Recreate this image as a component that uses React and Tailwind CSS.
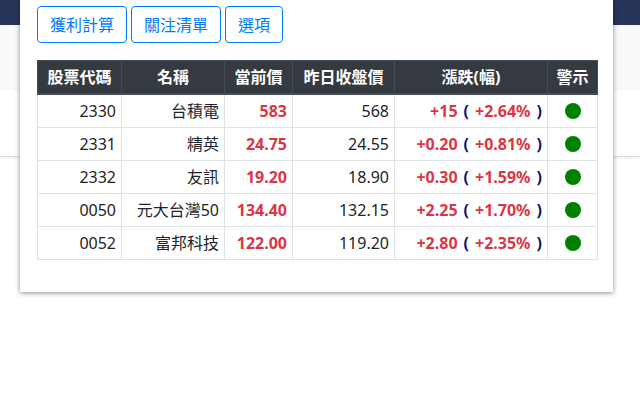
const rows = [
  { code: "2330", name: "台積電", price: "583", prev: "568", diff: "+15", pct: "+2.64%" },
  { code: "2331", name: "精英", price: "24.75", prev: "24.55", diff: "+0.20", pct: "+0.81%" },
  { code: "2332", name: "友訊", price: "19.20", prev: "18.90", diff: "+0.30", pct: "+1.59%" },
  { code: "0050", name: "元大台灣50", price: "134.40", prev: "132.15", diff: "+2.25", pct: "+1.70%" },
  { code: "0052", name: "富邦科技", price: "122.00", prev: "119.20", diff: "+2.80", pct: "+2.35%" },
];

const headers = [
  { label: "股票代碼", w: "w-[84px]" },
  { label: "名稱", w: "w-[103px]" },
  { label: "當前價", w: "w-[68px]" },
  { label: "昨日收盤價", w: "w-[102px]" },
  { label: "漲跌(幅)", w: "w-[153px]" },
  { label: "警示", w: "w-[50px]" },
];

const td = "border border-[#dee2e6] px-[5px] py-1 text-right";

export default function App() {
  return (
    <div
      className="relative w-[640px] h-[400px] overflow-hidden bg-white text-[#212529] text-base leading-6"
      style={{ fontFamily: '"Noto Sans", "Noto Sans CJK TC", sans-serif' }}
    >
      {/* page behind the popup */}
      <div className="h-[25px] bg-[#263459]" />
      <div className="h-[65px] bg-[#f8f9fb]" />
      <div className="h-[67px] bg-white border-b border-[#dcdcdc] shadow-[0_1px_3px_rgba(0,0,0,0.08)]" />

      {/* popup */}
      <div className="absolute left-[20px] top-0 w-[593px] h-[292px] bg-white shadow-[0_1px_5px_rgba(0,0,0,0.45)] px-[17px] pt-[6px]">
        <div className="flex gap-1">
          {["獲利計算", "關注清單", "選項"].map((t) => (
            <button
              key={t}
              className="h-[37px] px-3 border border-[#007bff] rounded text-[#007bff] text-base leading-6"
            >
              {t}
            </button>
          ))}
        </div>

        <table className="mt-[17px] w-[560px] table-fixed border-collapse">
          <thead>
            <tr className="bg-[#343a40] text-white">
              {headers.map((h) => (
                <th
                  key={h.label}
                  className={`${h.w} border border-[#454d55] border-b-2 px-[5px] py-1 font-bold text-center`}
                >
                  {h.label}
                </th>
              ))}
            </tr>
          </thead>
          <tbody>
            {rows.map((r) => (
              <tr key={r.code}>
                <td className={td}>{r.code}</td>
                <td className={td}>{r.name}</td>
                <td className={`${td} font-bold text-[#dc3545]`}>{r.price}</td>
                <td className={td}>{r.prev}</td>
                <td className={`${td} font-bold whitespace-nowrap`}>
                  <span className="text-[#dc3545]">{r.diff}</span>
                  <span className="text-[#0a1470] mx-[6px]">(</span>
                  <span className="text-[#dc3545]">{r.pct}</span>
                  <span className="text-[#0a1470] ml-[6px]">)</span>
                </td>
                <td className="border border-[#dee2e6] px-[5px] py-1">
                  <div className="mx-auto w-4 h-4 rounded-full bg-[#008000]" />
                </td>
              </tr>
            ))}
          </tbody>
        </table>
      </div>
    </div>
  );
}
